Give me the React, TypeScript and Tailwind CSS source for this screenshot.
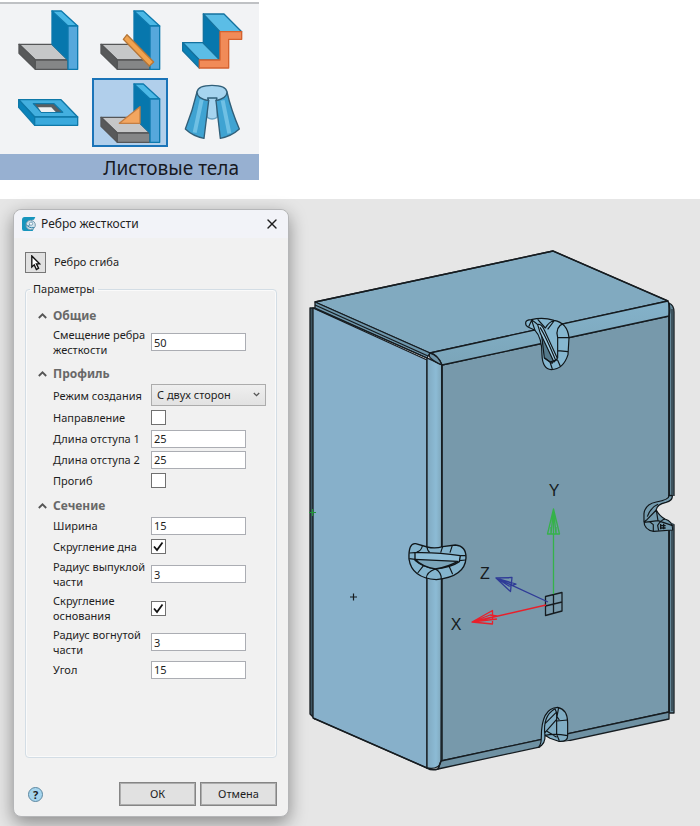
import React, { useState } from 'react';
import { X } from 'lucide-react';

interface ToolProps {
  title: string;
  viewBox: string;
  active?: boolean;
  children: React.ReactNode;
}

const Tool: React.FC<ToolProps> = ({ title, viewBox, active = false, children }) => (
  <button
    type="button"
    aria-label={title}
    aria-pressed={active}
    className={`h-[69px] w-[76px] ${active ? 'bg-[#b1cfeb] outline-2 -outline-offset-2 outline-[#1b74b8]' : ''}`}
  >
    <svg viewBox={viewBox} className="h-full w-full" strokeWidth="4" strokeLinejoin="round">
      {children}
    </svg>
  </button>
);

// Полка и стенка, общие для трёх значков
const Bend: React.FC = () => (
  <>
    <g stroke="#555657">
      <path d="M303 133H402L450 180H352Z" fill="#c6c7c8" />
      <path d="M303 133L352 180V208L303 160Z" fill="#58595a" />
      <path d="M352 180H450V208H352Z" fill="#858687" />
    </g>
    <g stroke="#0d79ad">
      <path d="M402 33L450 78V180L402 133Z" fill="#0777ad" />
      <path d="M402 33H430L479 78H450Z" fill="#4bb8e6" />
      <path d="M450 78H479V208H450Z" fill="#56a8dc" />
    </g>
  </>
);

const Ribbon: React.FC = () => (
  <header className="w-[259px] pt-[2px]">
    <div className="grid grid-cols-[repeat(3,76px)] gap-x-[6px] gap-y-1 border-t-2 border-[#bfc1c4] bg-[#f2f3f5] pt-px pb-[7px] pl-[10px]">
      <Tool title="Сгиб" viewBox="276 15 228 207">
        <Bend />
      </Tool>
      <Tool title="Замыкание" viewBox="276 15 228 207">
        <Bend />
        <path d="M381 104L370 118L448 198L461 186Z" fill="#f0a350" stroke="#b57638" />
      </Tool>
      <Tool title="Подсечка" viewBox="522 15 228 207">
        <g stroke="#14729f">
          <path d="M548 128H612L660 180H598Z" fill="#5bbde6" />
          <path d="M548 128L598 180V204L548 152Z" fill="#0b80b5" />
          <path d="M610 42L660 95V180L610 130Z" fill="#0777ad" />
          <path d="M610 42H672L725 95H660Z" fill="#5bbde6" />
        </g>
        <path d="M660 95H725V118H686V204H598V180H660Z" fill="#f18b58" stroke="#d4622f" />
      </Tool>
      <Tool title="Вырез" viewBox="30 234 228 207">
        <g stroke="#0f78a8">
          <path d="M56 299H183L233 351H104Z" fill="#43afdf" />
          <path d="M56 299L104 351V376L56 322Z" fill="#0b83ba" />
          <path d="M104 351H233V376H104Z" fill="#3aa9dc" />
          <path d="M100 311H162L188 337H124Z" fill="#5a5e61" />
        </g>
        <path d="M114 322H154L167 336H124Z" fill="#eef0f2" />
      </Tool>
      <Tool title="Ребро жесткости" viewBox="276 15 228 207" active>
        <Bend />
        <path d="M420 101V151H358Z" fill="#f3a660" stroke="#c47e42" />
      </Tool>
      <Tool title="Обечайка" viewBox="522 234 228 207">
        <g stroke="#315f79">
          <path d="M622 290H651V352Q636 362 622 352Z" fill="#a6d4ef" stroke="#6ba4c4" />
          <path d="M591 276Q594 294 626 302L612 415Q579 409 556 387Q578 332 591 276Z" fill="#3fa3d2" />
          <path d="M681 276Q678 294 648 302L661 415Q694 409 718 387Q694 332 681 276Z" fill="#3fa3d2" />
          <path d="M605 299L584 398" stroke="#6fc0e4" strokeWidth="12" />
          <path d="M668 301L688 400" stroke="#6fc0e4" strokeWidth="12" />
          <path d="M626 302Q591 296 591 276Q594 256 636 256Q678 256 681 276Q681 294 648 302L651 294H623Z" fill="#a6d4ef" />
        </g>
      </Tool>
    </div>
    <h1 className="bg-[#97b0d1] pt-[3px] pr-5 text-right text-[19px] leading-[23px] text-[#17191f]">Листовые тела</h1>
  </header>
);

const Section: React.FC<{ title: string; children: React.ReactNode }> = ({ title, children }) => {
  const [open, setOpen] = useState(true);
  return (
    <section className="mb-[6px]">
      <h3>
        <button
          type="button"
          aria-expanded={open}
          onClick={() => setOpen(!open)}
          className="flex h-[18px] items-center gap-[6px] text-[12px] font-bold text-[#686868]"
        >
          <svg viewBox="0 0 9 9" className="h-[9px] w-[9px]">
            <path d="M0.800 6L4.500 2.300L8.200 6" fill="none" stroke="#555" strokeWidth="1.800" />
          </svg>
          {title}
        </button>
      </h3>
      {open && <div className="pl-[15px]">{children}</div>}
    </section>
  );
};

interface RowProps {
  id: string;
  label: string;
  height?: string;
  children: React.ReactNode;
}

const Row: React.FC<RowProps> = ({ id, label, height = 'h-[21px]', children }) => (
  <div className={`flex items-center ${height}`}>
    <label htmlFor={id} className="w-[98px] shrink-0 pr-1 leading-[15px]">
      {label}
    </label>
    {children}
  </div>
);

const NumberRow: React.FC<{ id: string; label: string; value: string; height?: string }> = ({
  id,
  label,
  value,
  height
}) => (
  <Row id={id} label={label} height={height}>
    <input
      id={id}
      type="text"
      defaultValue={value}
      className="h-[18px] w-[95px] border border-[#abadb3] bg-white px-[2px] leading-[16px]"
    />
  </Row>
);

const CheckRow: React.FC<{ id: string; label: string; checked?: boolean; height?: string }> = ({
  id,
  label,
  checked = false,
  height
}) => (
  <Row id={id} label={label} height={height}>
    <span className="relative flex">
      <input
        id={id}
        type="checkbox"
        defaultChecked={checked}
        className="peer h-[15px] w-[15px] appearance-none border border-[#707070] bg-white"
      />
      <svg viewBox="0 0 15 15" className="pointer-events-none absolute inset-0 hidden peer-checked:block">
        <path d="M3 7.500L6 11L11.500 3.500" fill="none" stroke="#111" strokeWidth="1.800" />
      </svg>
    </span>
  </Row>
);

const RibDialog: React.FC = () => (
  <form
    role="dialog"
    aria-labelledby="dialog-title"
    onSubmit={(e) => e.preventDefault()}
    className="mt-[10px] mb-[9px] ml-[13px] flex w-[276px] shrink-0 flex-col rounded-lg border border-[#b5b6b8] bg-[#f1f1f1] px-[11px] pb-[10px] text-[11px] text-[#1e1e1e] shadow-[0_6px_18px_rgba(0,0,0,0.4)]"
  >
    <div className="-mx-[11px] flex h-7 items-center rounded-t-lg bg-[#f2f3f8] pr-2 pl-2">
      <svg viewBox="0 0 42 42" className="h-[14px] w-[14px]">
        <path d="M8 0H40L36 8Q16 8 15 20Q14 34 36 34L32 42H6Q0 42 0 35V9Q0 0 8 0Z" fill="#1795bd" />
        <circle cx="26" cy="24" r="14" fill="#d3e4ee" stroke="#7d9cae" strokeWidth="3" />
        <path d="M12 22Q20 34 36 32M19 28L30 14" fill="none" stroke="#2c7fa5" strokeWidth="3" />
        <circle cx="27" cy="20" r="5" fill="#f7fbfd" stroke="#54849e" strokeWidth="2" />
      </svg>
      <h2 id="dialog-title" className="ml-[5px] flex-1 text-[12px] leading-4">Ребро жесткости</h2>
      <button type="button" aria-label="Закрыть">
        <X className="h-4 w-4" strokeWidth={2} />
      </button>
    </div>

    <div className="mt-[14px] flex items-center">
      <button
        id="pick"
        type="button"
        aria-label="Выбрать ребро"
        className="flex h-[21px] w-[21px] items-center justify-center border border-[#777] bg-[#e1e1e1]"
      >
        <svg viewBox="0 0 34 52" className="h-4 w-[11px]">
          <path d="M5 3V39L13 32L20 47L27 43L20 29H31Z" fill="#fff" stroke="#111" strokeWidth="4.500" />
        </svg>
      </button>
      <label htmlFor="pick" className="ml-2">Ребро сгиба</label>
    </div>

    <fieldset className="mt-2 flex-1 rounded border border-[#d3dde5] pl-3 shadow-[inset_0_0_0_1px_#fafafa]">
      <legend className="-ml-2 px-[3px] leading-4">Параметры</legend>
      <div className="pt-[10px]">
        <Section title="Общие">
          <NumberRow id="offset" label="Смещение ребра жесткости" value="50" height="h-[34px]" />
        </Section>
        <Section title="Профиль">
          <Row id="mode" label="Режим создания" height="h-6">
            <span className="relative flex">
              <select
                id="mode"
                className="h-[22px] w-[115px] appearance-none border border-[#acacac] bg-linear-to-b from-[#efefef] to-[#e2e2e2] pl-[5px]"
              >
                <option>С двух сторон</option>
                <option>С одной стороны</option>
              </select>
              <svg viewBox="0 0 7 7" className="pointer-events-none absolute top-[7px] right-[6px] h-[7px] w-[7px]">
                <path d="M0.800 2L3.500 4.700L6.200 2" fill="none" stroke="#555" strokeWidth="1.300" />
              </svg>
            </span>
          </Row>
          <CheckRow id="direction" label="Направление" />
          <NumberRow id="indent1" label="Длина отступа 1" value="25" />
          <NumberRow id="indent2" label="Длина отступа 2" value="25" />
          <CheckRow id="sag" label="Прогиб" />
        </Section>
        <Section title="Сечение">
          <NumberRow id="width" label="Ширина" value="15" />
          <CheckRow id="bottom" label="Скругление дна" checked />
          <NumberRow id="convex" label="Радиус выпуклой части" value="3" height="h-[34px]" />
          <CheckRow id="base" label="Скругление основания" checked height="h-[34px]" />
          <NumberRow id="concave" label="Радиус вогнутой части" value="3" height="h-[34px]" />
          <NumberRow id="angle" label="Угол" value="15" />
        </Section>
      </div>
    </fieldset>

    <div className="mt-6 flex items-center gap-1">
      <button
        type="button"
        aria-label="Справка"
        className="ml-[3px] h-[15px] w-[15px] rounded-full border border-[#5d87a0] bg-[#a5d5ee] text-[11px] leading-[13px] font-bold"
      >
        ?
      </button>
      <button type="submit" className="ml-auto h-6 w-[77px] border border-[#858585] bg-[#e1e1e1] ring-1 ring-[#adadad] ring-inset">
        ОК
      </button>
      <button type="button" className="h-6 w-[77px] border border-[#858585] bg-[#e1e1e1] ring-1 ring-[#adadad] ring-inset">
        Отмена
      </button>
    </div>
  </form>
);

const Model: React.FC = () => (
  <svg
    viewBox="300 199 400 627"
    role="img"
    aria-label="Модель короба с ребрами жесткости"
    className="ml-[11px] min-w-0 flex-1 self-start"
    fill="none"
    strokeLinejoin="round"
  >
    <defs>
      <linearGradient id="corner">
        <stop offset="0" stopColor="#80a9c1" />
        <stop offset="0.6" stopColor="#8cbbd5" />
        <stop offset="1" stopColor="#7fa6ba" />
      </linearGradient>
      <linearGradient id="topFillet" x2="0" y2="1">
        <stop offset="0" stopColor="#84b2ca" />
        <stop offset="1" stopColor="#7ba5b9" />
      </linearGradient>
    </defs>

    {/* Грани */}
    <g stroke="#161c20" strokeWidth="1.300">
      <path d="M669 303Q674 305 674 312V713H669Z" fill="#648899" />
      <path d="M310 308H315V719L310 714Z" fill="#3e5561" />
      <path d="M313 308L427 360V768L313 718Z" fill="#87b0ca" />
      <path d="M315 302L553 251L668 301L430 353Z" fill="#81aac0" />
      <path d="M315 302L430 353L427 358L315 308Z" fill="#6e97ac" />
      <path d="M315 305L428 356M316 309L436 362" />
      <path d="M427 358L442 365V762Q438 770 427 768Z" fill="url(#corner)" />
      <path d="M442 365L669 316V712L441 761Z" fill="#7799ab" />
      <path d="M430 353L668 301Q671 308 669 316L442 365Q438 355 430 353Z" fill="url(#topFillet)" />
      <path d="M430 353Q426 358 442 365Q438 355 430 353" fill="#6f96aa" />
      <path d="M441 761L669 712V719L438 769Z" fill="#6e91a3" />
      <path d="M313 718L427 768Q432 771 438 769L441 761" strokeWidth="1.500" />
      <path d="M669 303V712M315 302L553 251L668 301M442 365V761" strokeWidth="1.500" />
      <path d="M672 309V711" strokeWidth="1" />
    </g>

    {/* Верхнее ребро */}
    <g transform="translate(500 290) scale(0.3333)" stroke="#101619" strokeWidth="3.500">
      <path
        d="M77 98Q78 90 94 89Q128 80 162 91Q202 98 207 143L204 194Q190 238 154 239Q127 236 126 194Q126 142 105 121L84 111Q76 107 77 98Z"
        fill="#86b7d0"
      />
      <path d="M124 128L133 204L156 220L161 213Z" fill="#557a8c" />
      <path d="M113 104Q124 100 134 122L172 205L162 216L121 130Z" fill="#9dcbe3" />
      <path d="M120 112Q138 140 167 211" />
      <path d="M94 89Q108 98 113 104M105 121L95 91L86 110M113 88L136 114Q148 94 162 93L143 118M207 143H173Q165 111 189 101M173 143V205M173 182L204 185M173 211L182 231M150 216L157 237M134 204L150 216L173 209" />
    </g>

    {/* Боковое ребро */}
    <g transform="translate(390 470) scale(0.3333)" stroke="#101619" strokeWidth="4">
      <path
        d="M57 267Q55 218 77 221L112 231Q135 237 158 230L196 225Q229 228 228 264Q225 320 139 329Q65 324 57 267Z"
        fill="#84b4cd"
      />
      <path d="M75 248Q140 246 211 257L208 275Q184 292 136 297Q97 291 75 271Z" fill="#8fbfd8" />
      <path d="M75 268L203 274Q176 290 136 297Q97 291 75 268Z" fill="#7ba5ba" />
      <path d="M58 249L75 248M75 268L58 266M211 257H227M208 272L227 270M97 228Q94 243 80 246M111 231Q113 244 119 247M158 230L152 248M187 226L180 248M101 286L83 309M109 325Q110 306 136 297Q154 306 154 327M177 288L188 313" strokeWidth="3.500" />
    </g>

    {/* Вырез справа */}
    <g transform="translate(390 470) scale(0.3333)" stroke="#101619" strokeWidth="3.500">
      <path d="M857 78V164L824 148L797 121Q801 103 830 97Q846 92 849 78Z" fill="#e6e6e6" stroke="none" />
      <path
        d="M847 77Q848 92 828 97Q800 103 799 120Q807 137 825 147Q849 154 848 180L791 184Q761 179 762 151V131Q765 103 799 96Q837 90 838 76Z"
        fill="#749bae"
      />
      <path d="M799 120L771 149L762 155M772 140Q782 112 804 103M799 120L804 152L762 157M804 152L848 167M790 184V164L780 156M806 182L803 166Q813 150 825 147" />
      <path d="M812 162V178M821 161V178M810 167H827M810 174H827" strokeWidth="4" />
    </g>

    {/* Нижнее ребро */}
    <g transform="translate(300 640) scale(0.3333)" stroke="#101619" strokeWidth="3.500">
      <path d="M721 325V306L735 285L780 306L810 303L806 322L726 340Z" fill="#e6e6e6" stroke="none" />
      <path
        d="M716 322Q724 313 724 292Q724 204 773 202Q803 208 803 248V287Q804 306 776 304L750 295L735 286Q737 312 716 322Z"
        fill="#80adc4"
      />
      <path d="M735 286Q727 228 765 206L770 218V283L778 302M735 278L770 238M736 250L768 218M735 286Q764 280 803 287M771 243L803 240M776 203L771 230L778 240M741 274L770 292" />
    </g>

    {/* Оси координат */}
    <g strokeWidth="1.300">
      <path d="M545.500 596.500L562 592.500V611L545.500 615.500ZM553.500 594V613M545.500 606L562 602" stroke="#161c20" />
      <path d="M553.500 594V509M553.500 509L547.500 534H559.500ZM553.500 509L551 534M553.500 509L556 534M551 534V527M556 534V527" stroke="#35b24a" />
      <path d="M546 605L472 622M472 622L492.500 610.500V624ZM472 622L497 616L490 615ZM472 622L497 619" stroke="#e8202b" />
      <path d="M548 602L496 578M496 578L512 577.500L510.500 591.500ZM496 578L516 584L509 586ZM496 578L511 583" stroke="#2f3b97" />
    </g>
    <g fill="#161c20" fontSize="16" textAnchor="middle" className="font-['Liberation_Sans']">
      <text x="554" y="496">Y</text>
      <text x="485" y="579">Z</text>
      <text x="456" y="630">X</text>
    </g>
    <path d="M350 597H357M353.500 593.500V600.500" stroke="#161c20" strokeWidth="1.200" />
    <path d="M309 512.500H316M312.500 509V516" stroke="#23953a" strokeWidth="1.200" />
  </svg>
);

const App: React.FC = () => {
  return (
    <div className="flex min-h-screen flex-col bg-white font-['Noto_Sans',sans-serif]">
      <Ribbon />
      <main className="mt-[19px] flex flex-1 bg-[#e6e6e6]">
        <RibDialog />
        <Model />
      </main>
    </div>
  );
};

export default App;
